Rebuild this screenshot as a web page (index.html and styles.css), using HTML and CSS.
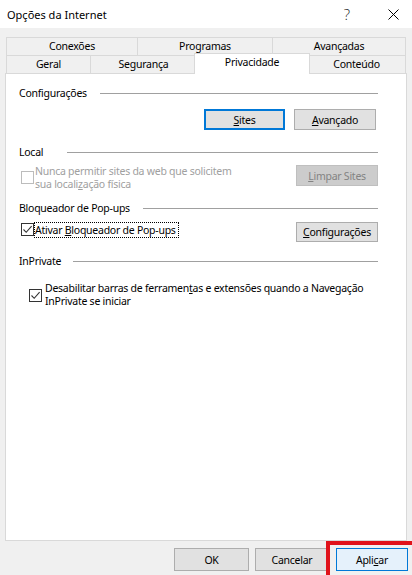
FILE: index.html
```html
<!DOCTYPE html>
<html lang="pt-BR">
<head>
<meta charset="utf-8">
<title>Opções da Internet</title>
<link rel="stylesheet" href="styles.css">
</head>
<body>
<div class="window">
  <div class="titlebar">
    <span class="title">Opções da Internet</span>
    <span class="tb-help">?</span>
    <span class="tb-close">
      <svg width="11" height="11" viewBox="0 0 11 11"><path d="M0.5 0.5 L10.5 10.5 M10.5 0.5 L0.5 10.5" stroke="#000" stroke-width="1" fill="none"/></svg>
    </span>
  </div>

  <div class="tabs">
    <div class="tabrow row1">
      <div class="tab">Conexões</div>
      <div class="tab">Programas</div>
      <div class="tab last">Avançadas</div>
    </div>
    <div class="tabrow row2">
      <div class="tab">Geral</div>
      <div class="tab">Segurança</div>
      <div class="tab selected">Privacidade</div>
      <div class="tab last">Conteúdo</div>
    </div>
  </div>

  <div class="panel">
    <div class="group-head h-config"><span>Configurações</span><i class="rule"></i></div>
    <div class="btnrow">
      <button class="btn btn-default"><u>S</u>ites</button>
      <button class="btn btn-adv"><u>A</u>vançado</button>
    </div>

    <div class="group-head h-local"><span>Local</span><i class="rule"></i></div>
    <div class="optrow local-row">
      <span class="chk disabled"></span>
      <span class="opt-text disabled-text">Nunca permitir sites da web que solicitem<br>sua locali<u>z</u>ação física</span>
      <button class="btn btn-disabled"><u>L</u>impar Sites</button>
    </div>

    <div class="group-head h-popup"><span>Bloqueador de Pop-ups</span><i class="rule"></i></div>
    <div class="optrow popup-row">
      <span class="chk checked"><svg width="11" height="11" viewBox="0 0 11 11"><path d="M1.5 5.5 L4.2 8.3 L9.6 2.2" stroke="#333" stroke-width="1.1" fill="none"/></svg></span>
      <span class="opt-text focus">Ativar <u>B</u>loqueador de Pop-ups</span>
      <button class="btn"><u>C</u>onfigurações</button>
    </div>

    <div class="group-head h-inprivate"><span>InPrivate</span><i class="rule"></i></div>
    <div class="optrow inprivate-row">
      <span class="chk checked"><svg width="11" height="11" viewBox="0 0 11 11"><path d="M1.5 5.5 L4.2 8.3 L9.6 2.2" stroke="#333" stroke-width="1.1" fill="none"/></svg></span>
      <span class="opt-text">Desabilitar barras de ferramen<u>t</u>as e extensões quando a Navegação<br>InPrivate se iniciar</span>
    </div>
  </div>

  <div class="footer">
    <button class="btn fbtn">OK</button>
    <button class="btn fbtn cancel">Cancelar</button>
    <button class="btn fbtn apply">Apli<u>c</u>ar</button>
    <div class="highlight"></div>
  </div>
</div>
</body>
</html>
```

FILE: styles.css
```css
* { box-sizing: border-box; }
html, body { margin: 0; padding: 0; }
body {
  width: 412px;
  height: 575px;
  overflow: hidden;
  background: #f0f0f0;
  font-family: "Noto Sans", "Segoe UI", sans-serif;
  font-size: 10.5px;
  letter-spacing: -0.25px;
  color: #000;
}
.window {
  display: flex;
  flex-direction: column;
  height: 575px;
}
.titlebar {
  height: 28px;
  background: #fff;
  display: flex;
  align-items: center;
  padding-left: 7px;
}
.title { flex: 1; font-size: 11px; letter-spacing: 0; }
.tb-help {
  width: 46px;
  text-align: center;
  padding-left: 8px;
  font-size: 15px;
  font-family: "Open Sans", "Noto Sans", sans-serif;
  font-weight: 300;
  letter-spacing: 0;
  color: #222;
}
.tb-close {
  width: 46px;
  display: flex;
  justify-content: center;
  padding-left: 8px;
}

.tabs {
  padding: 9px 6px 0 6px;
  position: relative;
  z-index: 2;
}
.tabrow {
  display: grid;
  height: 18px;
}
.row1 { grid-template-columns: 131px 135px 134px; }
.row2 { grid-template-columns: 84px 106px 112px 98px; }
.tab {
  border-top: 1px solid #d9d9d9;
  border-left: 1px solid #d9d9d9;
  text-align: center;
  line-height: 17px;
  background: #f0f0f0;
  white-space: nowrap;
}
.tab.last { border-right: 1px solid #d9d9d9; }
.tab.selected {
  background: #fff;
  margin: -2px -2px -1px -2px;
  border-right: 1px solid #d9d9d9;
  line-height: 17px;
  position: relative;
  z-index: 3;
}
.tab.selected + .tab { border-left: none; }

.panel {
  margin: 0 5px;
  height: 468px;
  background: #fff;
  border: 1px solid #d9d9d9;
  padding: 0 28px 0 13px;
  display: flex;
  flex-direction: column;
  position: relative;
  z-index: 1;
}
.group-head {
  display: flex;
  align-items: center;
  height: 16px;
  line-height: 16px;
}
.group-head span { white-space: nowrap; flex: none; }
.rule {
  flex: 1;
  height: 1px;
  background: #a0a0a0;
}
.h-config { margin-top: 11px; }
.h-config span { width: 81px; }
.h-local { margin-top: 14px; }
.h-local span { width: 48px; }
.h-popup { margin-top: 9px; }
.h-popup span { width: 124px; }
.h-inprivate { margin-top: 11px; }
.h-inprivate span { width: 54px; }

.btn {
  font-family: "Noto Sans", "Segoe UI", sans-serif;
  font-size: 10.5px;
  letter-spacing: -0.25px;
  color: #000;
  background: #e1e1e1;
  border: 1px solid #adadad;
  border-radius: 0;
  padding: 0;
  margin: 0;
  height: 21px;
  line-height: 18px;
}
.btnrow {
  margin-top: 8px;
  margin-right: 2px;
  display: flex;
  justify-content: flex-end;
  gap: 9px;
}
.btnrow .btn { width: 81px; }
.btnrow .btn-adv { width: 82px; }
.btn-default {
  border: 2px solid #0078d7;
}
.btn-disabled {
  background: #cccccc;
  border-color: #bfbfbf;
  color: #838383;
}

.optrow {
  display: flex;
  align-items: flex-start;
}
.chk {
  flex: none;
  width: 13px;
  height: 13px;
  border: 1px solid #333;
  background: #fff;
  display: flex;
  align-items: center;
  justify-content: center;
}
.chk.disabled { border-color: #bcbcbc; }
.opt-text {
  line-height: 13px;
  white-space: nowrap;
}
.disabled-text { color: #a0a0a0; }

.local-row { margin-top: 5px; }
.local-row .chk { margin: 6px 1px 0 2px; }
.local-row .opt-text { flex: 1; }
.local-row .btn { width: 82px; }

.popup-row { margin-top: 6px; height: 20px; }
.popup-row .chk { margin: 1px 0 0 2px; }
.popup-row .opt-text.focus {
  flex: none;
  outline: 1px dotted #000;
  outline-offset: 0;
  margin: 1px 0 0 1px;
  height: 14px;
  line-height: 14px;
  padding: 0 2px 0 0;
}
.popup-row .btn { margin-left: auto; width: 82px; height: 20px; }

.inprivate-row { margin-top: 13px; }
.inprivate-row .chk { margin: 7px 3px 0 10px; }

.footer {
  height: 34px;
  padding: 7px 4px 0 0;
  display: flex;
  justify-content: flex-end;
  align-items: flex-start;
  position: relative;
}
.fbtn {
  width: 75px;
  height: 23px;
  line-height: 20px;
  margin-left: 6px;
}
.fbtn.cancel { width: 74px; }
.fbtn.apply {
  width: 72px;
  margin-left: 7px;
  background: #e5f1fb;
  border-color: #0078d7;
}
.highlight {
  position: absolute;
  left: 326px;
  top: 0;
  width: 90px;
  height: 38px;
  border: 4px solid #e0121a;
  pointer-events: none;
}
```
